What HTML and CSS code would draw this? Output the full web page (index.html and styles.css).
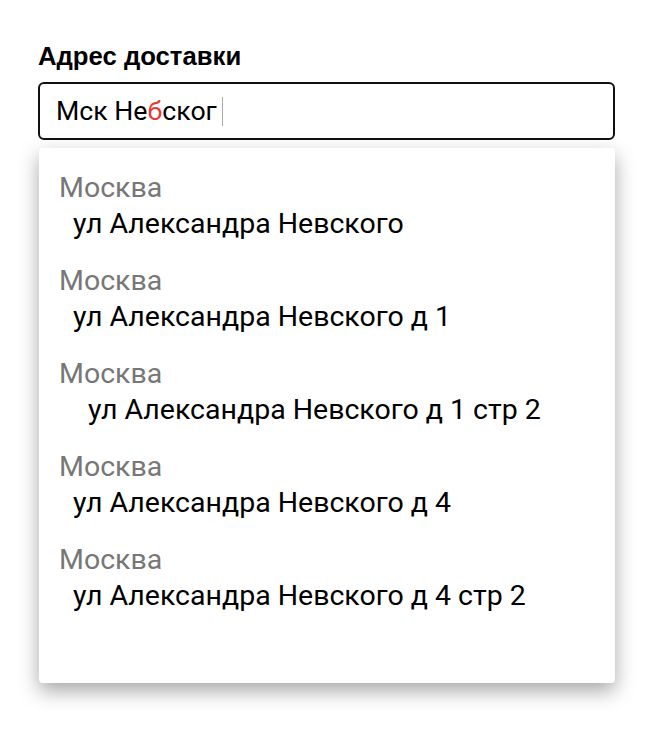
FILE: index.html
```html
<!DOCTYPE html>
<html lang="ru">
<head>
<meta charset="utf-8">
<link rel="stylesheet" href="styles.css">
</head>
<body>
<div class="field">
  <label class="label">Адрес доставки</label>
  <div class="input">Мск Не<span class="typo">б</span>ског<span class="caret"></span></div>
  <ul class="dropdown">
    <li class="item"><div class="city">Москва</div><div class="street">ул Александра Невского</div></li>
    <li class="item"><div class="city">Москва</div><div class="street">ул Александра Невского д 1</div></li>
    <li class="item"><div class="city">Москва</div><div class="street street-deep">ул Александра Невского д 1 стр 2</div></li>
    <li class="item"><div class="city">Москва</div><div class="street">ул Александра Невского д 4</div></li>
    <li class="item"><div class="city">Москва</div><div class="street">ул Александра Невского д 4 стр 2</div></li>
  </ul>
</div>
</body>
</html>
```

FILE: styles.css
```css
html, body {
  margin: 0;
  padding: 0;
  background: #ffffff;
}
body {
  font-family: Roboto, "Noto Sans", sans-serif;
  color: #000;
}
.field {
  padding: 41px 35px 64px 38px;
  display: flex;
  flex-direction: column;
}
.label {
  font-family: "Liberation Sans", Arial, sans-serif;
  font-weight: 700;
  font-size: 25.7px;
  line-height: 30px;
  margin-bottom: 11px;
}
.input {
  height: 58px;
  box-sizing: border-box;
  border: 2px solid #111;
  border-radius: 6px;
  padding: 0 0 0 16px;
  font-size: 26.7px;
  display: flex;
  align-items: center;
}
.typo {
  color: #e53935;
}
.caret {
  display: inline-block;
  width: 1px;
  height: 29px;
  background: #aaa;
  margin-left: 5px;
}
.dropdown {
  list-style: none;
  margin: 8px 0 0 1px;
  padding: 22px 0 48px 20px;
  background: #fff;
  border-radius: 4px;
  box-shadow: 0 8px 20px rgba(0, 0, 0, 0.35);
  min-height: 535px;
  box-sizing: border-box;
}
.item {
  font-size: 28.5px;
  line-height: 36px;
  margin-bottom: 21px;
}
.city {
  color: #777;
}
.street {
  padding-left: 14px;
}
.street-deep {
  padding-left: 29px;
}
```
